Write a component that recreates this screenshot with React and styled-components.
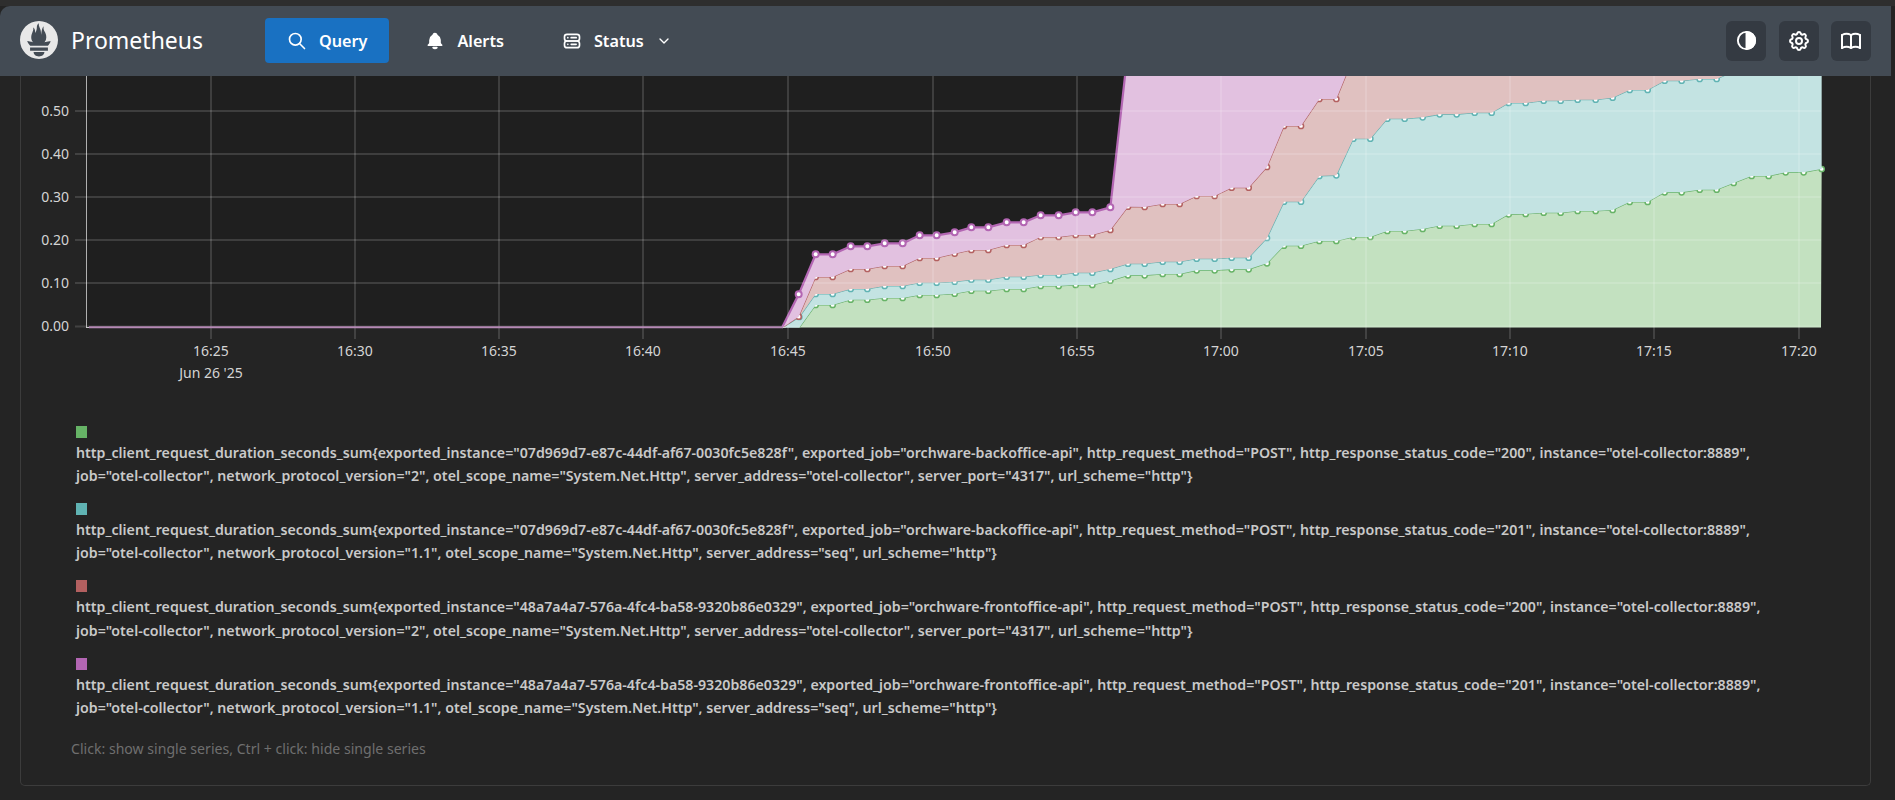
import React from "react";
import styled, { createGlobalStyle } from "styled-components";
import { SiPrometheus } from "react-icons/si";
import { TbSearch, TbBellFilled, TbServer2, TbChevronDown, TbSettings, TbBook } from "react-icons/tb";

const FONT = `"Noto Sans", "Open Sans", Arial, sans-serif`;

const Global = createGlobalStyle`
  html, body { margin: 0; padding: 0; background: #242424; height: 100%; overflow: hidden; }
  body { font-family: ${FONT}; color: #c9c9c9; }
`;

const Shell = styled.div`
  display: flex;
  flex-direction: column;
  height: 800px;
  border-top: 6px solid #2e2e2e;
  box-sizing: border-box;
`;

const TopBar = styled.header`
  flex: none;
  height: 70px;
  margin-right: 4px;
  padding: 0 20px 0 20px;
  display: flex;
  align-items: center;
  background: #434b54;
  border-top-left-radius: 10px;
  box-sizing: border-box;
`;

const Brand = styled.div`
  width: 245px;
  display: flex;
  align-items: center;
  gap: 13px;
  color: #fff;
  margin-top: -2px;
`;

const BrandName = styled.span`
  font-size: 23px;
  line-height: 1;
  font-weight: 400;
`;

const Nav = styled.nav`
  display: flex;
  align-items: center;
  gap: 14px;
  margin-top: -1px;
`;

const NavItem = styled.a`
  height: 45px;
  padding: 0 22px;
  display: flex;
  align-items: center;
  gap: 12px;
  border-radius: 4px;
  font-size: 16.2px;
  font-weight: 600;
  color: #fff;
  background: ${(p) => (p.$active ? "#1971c2" : "transparent")};
`;

const Actions = styled.div`
  margin-left: auto;
  display: flex;
  gap: 12.5px;
  margin-top: -1px;
`;

const ActionButton = styled.button`
  width: 40px;
  height: 40px;
  padding: 0;
  border: 0;
  border-radius: 6px;
  background: #343a42;
  color: #fff;
  display: flex;
  align-items: center;
  justify-content: center;
`;

const Card = styled.main`
  flex: none;
  width: 1851px;
  height: 710px;
  margin-left: 20px;
  border: 1px solid #3c3c3c;
  border-top: 0;
  border-radius: 0 0 5px 5px;
  box-sizing: border-box;
  display: flex;
  flex-direction: column;
`;

const ChartFrame = styled.svg`
  display: block;
  flex: none;
  width: 1849px;
  height: 324px;
`;

const AxisLabel = styled.text`
  font-family: ${FONT};
  font-size: 14px;
  fill: #d4d4d4;
`;

const Legend = styled.ul`
  list-style: none;
  margin: 26px 0 0;
  padding: 0 60px 0 55px;
  display: flex;
  flex-direction: column;
  gap: 15.6px;
`;

const LegendItem = styled.li`
  display: flex;
  flex-direction: column;
  align-items: flex-start;
  gap: 3px;
`;

const Swatch = styled.span`
  width: 11px;
  height: 12px;
  background: ${(p) => p.$color};
`;

const SeriesLabel = styled.span`
  font-size: 14.2px;
  font-weight: 600;
  line-height: 23.3px;
  color: #c9c9c9;
`;

const Hint = styled.p`
  margin: 19px 0 0 50px;
  font-size: 14.1px;
  line-height: 22px;
  color: #6f6f6f;
`;

const COLORS = { green: "#66b366", teal: "#60b3b3", red: "#b36060", purple: "#b366b3" };
const FILLS = { green: "#c3e1c0", teal: "#c3e3e2", red: "#e0c1c0", purple: "#e2c1e0" };

const map = (base, pts) => pts.map(([x, y]) => [base + x / 3, 70 + y / 3]);

const greenLine = [
  ...map(760, [[118,773],[167,705],[218,705],[272,689],[322,689],[374,684],[428,684],[479,675],[530,675],[584,671],[634,662],[685,662],[740,657],[791,657],[842,648],[896,648],[947,645],[997,645],[1051,632],[1104,616]]),
  ...map(1140, [[14,616],[68,612],[119,612],[170,601],[224,601],[275,598],[326,598],[381,580],[432,527],[483,527],[538,513],[589,513],[640,501],[691,501],[742,483],[794,483],[848,477],[899,467],[950,467],[1004,462],[1055,462],[1106,433]]),
  ...map(1520, [[17,432],[71,428],[122,428],[173,423],[227,423],[278,420],[329,396],[383,396],[434,367],[485,367],[539,359],[590,359],[641,339],[695,318],[746,318],[797,307],[851,307],[905,297]]),
];

const tealLine = [
  ...map(760, [[67,773],[118,741],[167,672],[218,672],[272,657],[322,657],[374,648],[428,648],[479,638],[530,638],[584,635],[634,629],[685,629],[740,620],[791,620],[842,615],[896,615],[947,608],[997,608],[1051,597],[1104,581]]),
  ...map(1140, [[14,581],[68,575],[119,575],[170,566],[224,566],[275,563],[326,563],[381,504],[432,395],[483,395],[538,318],[589,316],[640,206],[691,206],[742,146],[794,146],[848,142],[899,133],[950,133],[1004,128],[1055,128],[1106,99]]),
  ...map(1520, [[17,99],[71,92],[122,92],[173,89],[227,89],[278,83],[329,60],[383,60],[434,32],[485,32],[539,27],[590,27],[641,4],[695,-20],[905,-60]]),
];

const redLine = [
  ...map(760, [[67,773],[116,740],[167,621],[218,621],[272,597],[322,597],[374,588],[428,588],[479,564],[530,564],[584,551],[634,540],[685,540],[740,525],[791,525],[842,501],[896,501],[947,495],[997,495],[1051,480],[1104,410]]),
  ...map(1140, [[14,411],[68,402],[119,402],[170,378],[224,378],[275,353],[326,353],[381,291],[432,168],[483,168],[538,87],[589,87],[640,-38],[2200,-100]]),
];

const purpleLine = map(760, [[67,771],[116,673],[167,553],[218,553],[272,529],[322,529],[374,520],[428,520],[479,496],[530,496],[584,487],[634,472],[685,472],[740,457],[791,457],[842,436],[896,436],[947,427],[997,427],[1051,412],[1104,-62],[3300,-100]]);

const flat = [[89, 327.3], [783, 327.3]];
const floor = [[783, 327.5], [1821, 327.5]];

const path = (pts) => pts.map((p) => p.join(",")).join(" ");

const SERIES = [
  { key: "green", line: greenLine, below: floor, lineWidth: 1.2, r: 2.6, sw: 1.5 },
  { key: "teal", line: tealLine, below: greenLine, lineWidth: 1.2, r: 2.6, sw: 1.5 },
  { key: "red", line: redLine, below: tealLine, lineWidth: 1.2, r: 2.6, sw: 1.5 },
  { key: "purple", line: purpleLine, below: redLine, lineWidth: 2.2, r: 3, sw: 2 },
];

const Y_TICKS = [["0.50", 111], ["0.40", 154], ["0.30", 197], ["0.20", 240], ["0.10", 283], ["0.00", 326.5]];
const X_TICKS = [["16:25", 211], ["16:30", 355], ["16:35", 499], ["16:40", 643], ["16:45", 788], ["16:50", 933], ["16:55", 1077], ["17:00", 1221], ["17:05", 1366], ["17:10", 1510], ["17:15", 1654], ["17:20", 1799]];

function Chart() {
  return (
    <ChartFrame viewBox="21 76 1849 324">
      <rect x="86" y="76" width="1735" height="251.5" fill="#1f1f1f" />
      {SERIES.map((s) => (
        <g key={s.key}>
          <polygon points={path([...s.line, ...[...s.below].reverse()])} fill={FILLS[s.key]} />
          <polyline points={path(s.line)} fill="none" stroke={COLORS[s.key]} strokeWidth={s.lineWidth} />
          {s.line
            .filter(([, y]) => y > 70 && y < 327)
            .map(([x, y]) => (
              <circle key={x} cx={x} cy={y} r={s.r} fill="#fff" stroke={COLORS[s.key]} strokeWidth={s.sw} />
            ))}
        </g>
      ))}
      <line x1="86.5" y1="76" x2="86.5" y2="327" stroke="#b0b0b0" />
      <line x1="86" y1="327.5" x2="786" y2="327.5" stroke="#c8c8c8" />
      {Y_TICKS.map(([label, y]) => (
        <g key={label}>
          <line x1="75" y1={y} x2="1821" y2={y} stroke="#fff" strokeOpacity="0.14" strokeWidth="2" />
          <AxisLabel x="69" y={y + 4.5} textAnchor="end">{label}</AxisLabel>
        </g>
      ))}
      {X_TICKS.map(([label, x]) => (
        <g key={label}>
          <line x1={x} y1="76" x2={x} y2="339" stroke="#fff" strokeOpacity="0.14" strokeWidth="2" />
          <AxisLabel x={x} y="356" textAnchor="middle">{label}</AxisLabel>
        </g>
      ))}
      <polyline points={path(flat)} fill="none" stroke="#b589b5" strokeWidth="2" />
      <AxisLabel x="211" y="378" textAnchor="middle">Jun 26 '25</AxisLabel>
    </ChartFrame>
  );
}

const BACK = { id: "07d969d7-e87c-44df-af67-0030fc5e828f", job: "orchware-backoffice-api" };
const FRONT = { id: "48a7a4a7-576a-4fc4-ba58-9320b86e0329", job: "orchware-frontoffice-api" };

const label = ({ id, job }, code, version, tail) =>
  `http_client_request_duration_seconds_sum{exported_instance="${id}", exported_job="${job}", http_request_method="POST", http_response_status_code="${code}", instance="otel-collector:8889", job="otel-collector", network_protocol_version="${version}", otel_scope_name="System.Net.Http", ${tail}, url_scheme="http"}`;

const COLLECTOR = `server_address="otel-collector", server_port="4317"`;
const SEQ = `server_address="seq"`;

const LEGEND = [
  { color: COLORS.green, text: label(BACK, "200", "2", COLLECTOR) },
  { color: COLORS.teal, text: label(BACK, "201", "1.1", SEQ) },
  { color: COLORS.red, text: label(FRONT, "200", "2", COLLECTOR) },
  { color: COLORS.purple, text: label(FRONT, "201", "1.1", SEQ) },
];

function HalfCircle() {
  return (
    <svg width="23" height="23" viewBox="0 0 24 24" fill="none" stroke="currentColor" strokeWidth="2">
      <circle cx="12" cy="12" r="9" />
      <path d="M12 3a9 9 0 0 1 0 18z" fill="currentColor" />
    </svg>
  );
}

export default function App() {
  return (
    <>
      <Global />
      <Shell>
        <TopBar>
          <Brand>
            <SiPrometheus size={38} color="#e8e8e8" />
            <BrandName>Prometheus</BrandName>
          </Brand>
          <Nav>
            <NavItem $active>
              <TbSearch size={20} />
              Query
            </NavItem>
            <NavItem>
              <TbBellFilled size={20} />
              Alerts
            </NavItem>
            <NavItem>
              <TbServer2 size={20} />
              Status
              <TbChevronDown size={16} />
            </NavItem>
          </Nav>
          <Actions>
            <ActionButton><HalfCircle /></ActionButton>
            <ActionButton><TbSettings size={24} /></ActionButton>
            <ActionButton><TbBook size={24} /></ActionButton>
          </Actions>
        </TopBar>
        <Card>
          <Chart />
          <Legend>
            {LEGEND.map((item) => (
              <LegendItem key={item.text}>
                <Swatch $color={item.color} />
                <SeriesLabel>{item.text}</SeriesLabel>
              </LegendItem>
            ))}
          </Legend>
          <Hint>Click: show single series, Ctrl + click: hide single series</Hint>
        </Card>
      </Shell>
    </>
  );
}
